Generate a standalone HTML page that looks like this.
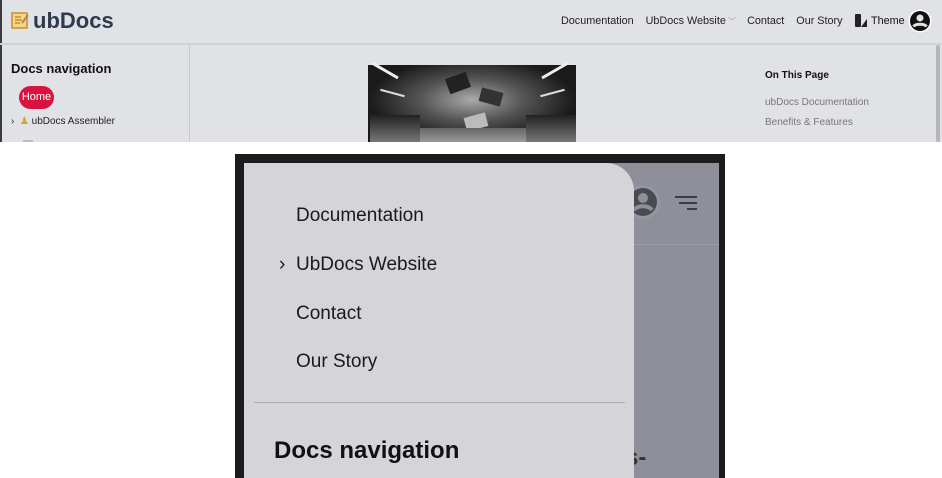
<!DOCTYPE html>
<html><head><meta charset="utf-8"><style>
*{margin:0;padding:0;box-sizing:border-box}
body{width:942px;height:478px;background:#fff;position:relative;overflow:hidden;font-family:"Liberation Sans",sans-serif}
.a{position:absolute}
</style></head><body>
<div class="a" style="left:0;top:0;width:942px;height:142px;background:#e1e2e5;overflow:hidden">
  <div class="a" style="left:0;top:0;width:2px;height:142px;background:#3a3a44"></div>
  <div class="a" style="left:0;top:43px;width:942px;height:2px;background:#d0d1d5"></div>
  <svg class="a" style="left:11px;top:11px" width="18" height="18" viewBox="0 0 18 18"><rect x="1" y="2" width="15" height="15" fill="#f4d58a" stroke="#c8902a" stroke-width="1.5"/><path d="M4 6h6M4 9h7M4 12h5" stroke="#c8902a" stroke-width="1.5"/><path d="M11 12l6-8" stroke="#a85" stroke-width="2"/></svg>
  <div class="a" style="left:33px;top:8px;font-size:22px;font-weight:bold;color:#2e3b4e">ubDocs</div>
  <div class="a" style="left:561px;top:15px;font-size:10.8px;color:#222;white-space:nowrap">Documentation<span style="margin-left:12px">UbDocs Website</span><span style="color:#999;font-size:8px"> ﹀</span><span style="margin-left:11px">Contact</span><span style="margin-left:12px">Our Story</span></div>
  <div class="a" style="left:855px;top:14px;width:6px;height:13px;background:#222;border-radius:1px"></div>
  <div class="a" style="left:861px;top:19px;width:0;height:0;border-left:6px solid transparent;border-bottom:8px solid #222"></div>
  <div class="a" style="left:871px;top:15px;font-size:10.8px;color:#111">Theme</div>
  <svg class="a" style="left:908px;top:9px" width="24" height="24" viewBox="0 0 24 24"><circle cx="12" cy="12" r="11.5" fill="#fff"/><circle cx="12" cy="12" r="10" fill="#111"/><circle cx="12" cy="9" r="3.5" fill="#e1e2e5"/><path d="M5.5 17.5c2-3 11-3 13 0" stroke="#e1e2e5" stroke-width="3" fill="none"/></svg>
  <div class="a" style="left:2px;top:45px;width:188px;height:97px;border-right:1px solid #c8c9cd"></div>
  <div class="a" style="left:11px;top:61px;font-size:13px;font-weight:bold;color:#111">Docs navigation</div>
  <div class="a" style="left:19px;top:86px;width:35px;height:23px;border-radius:12px;background:#d81340;color:#fff;font-size:11px;line-height:23px;text-align:center">Home</div>
  <div class="a" style="left:11px;top:116px;font-size:10px;color:#222">›&nbsp; <span style="color:#d9a520">♟</span> ubDocs Assembler</div>
  <div class="a" style="left:23px;top:140px;width:10px;height:2px;background:#bbb"></div>
  <div class="a" style="left:368px;top:65px;width:208px;height:77px;background:radial-gradient(ellipse at 50% 45%,#aaa 0%,#555 35%,#1a1a1a 70%)"></div>
  <div class="a" style="left:370px;top:69px;width:30px;height:3px;background:#eee;transform:rotate(30deg)"></div>
  <div class="a" style="left:540px;top:69px;width:30px;height:3px;background:#eee;transform:rotate(-30deg)"></div>
  <div class="a" style="left:380px;top:92px;width:25px;height:2px;background:#ddd;transform:rotate(15deg)"></div>
  <div class="a" style="left:540px;top:92px;width:25px;height:2px;background:#ddd;transform:rotate(-15deg)"></div>
  <div class="a" style="left:447px;top:75px;width:22px;height:16px;background:#222;transform:rotate(-20deg)"></div>
  <div class="a" style="left:480px;top:90px;width:22px;height:14px;background:#333;transform:rotate(15deg)"></div>
  <div class="a" style="left:465px;top:115px;width:22px;height:14px;background:#bbb;transform:rotate(-15deg)"></div>
  <div class="a" style="left:370px;top:115px;width:50px;height:27px;background:linear-gradient(#222,#777)"></div>
  <div class="a" style="left:526px;top:115px;width:50px;height:27px;background:linear-gradient(#222,#777)"></div>
  <div class="a" style="left:420px;top:128px;width:106px;height:14px;background:linear-gradient(#666,#999)"></div>
  <div class="a" style="left:765px;top:70px;font-size:10px;font-weight:bold;color:#111">On This Page</div>
  <div class="a" style="left:765px;top:97px;font-size:10px;color:#777">ubDocs Documentation</div>
  <div class="a" style="left:765px;top:117px;font-size:10px;color:#777">Benefits &amp; Features</div>
  <div class="a" style="left:936px;top:45px;width:4px;height:97px;background:#b5b6ba;border-radius:2px"></div>
</div>
<div class="a" style="left:235px;top:154px;width:490px;height:324px;background:#1c1c1e;overflow:hidden">
  <div class="a" style="left:9px;top:9px;width:475px;height:315px;background:#8e8f98"></div>
  <div class="a" style="left:9px;top:90px;width:475px;height:1px;background:#9a9ba3"></div>
  <svg class="a" style="left:390px;top:30px" width="36" height="36" viewBox="0 0 36 36"><circle cx="18" cy="18" r="17" fill="#9597a0"/><circle cx="18" cy="18" r="14" fill="#4a4b52"/><circle cx="18" cy="14" r="5" fill="#8e8f98"/><path d="M9 26c4-5 14-5 18 0" stroke="#8e8f98" stroke-width="4" fill="none"/></svg>
  <div class="a" style="left:440px;top:42px;width:22px;height:2px;background:#3d3e44"></div>
  <div class="a" style="left:444px;top:48px;width:18px;height:2px;background:#3d3e44"></div>
  <div class="a" style="left:452px;top:54px;width:10px;height:2px;background:#3d3e44"></div>
  <div class="a" style="left:390px;top:290px;font-size:24px;font-weight:bold;color:#333">s-</div>
  <div class="a" style="left:9px;top:9px;width:390px;height:320px;background:#d5d4d9;border-top-right-radius:28px"></div>
  <div class="a" style="left:61px;top:51px;font-size:19px;color:#1a1a1a">Documentation</div>
  <div class="a" style="left:44px;top:100px;font-size:19px;color:#1a1a1a">›</div>
  <div class="a" style="left:61px;top:100px;font-size:19px;color:#1a1a1a">UbDocs Website</div>
  <div class="a" style="left:61px;top:149px;font-size:19px;color:#1a1a1a">Contact</div>
  <div class="a" style="left:61px;top:197px;font-size:19px;color:#1a1a1a">Our Story</div>
  <div class="a" style="left:19px;top:248px;width:371px;height:1px;background:#aeadb3"></div>
  <div class="a" style="left:39px;top:283px;font-size:24px;font-weight:bold;color:#111">Docs navigation</div>
</div>
</body></html>
